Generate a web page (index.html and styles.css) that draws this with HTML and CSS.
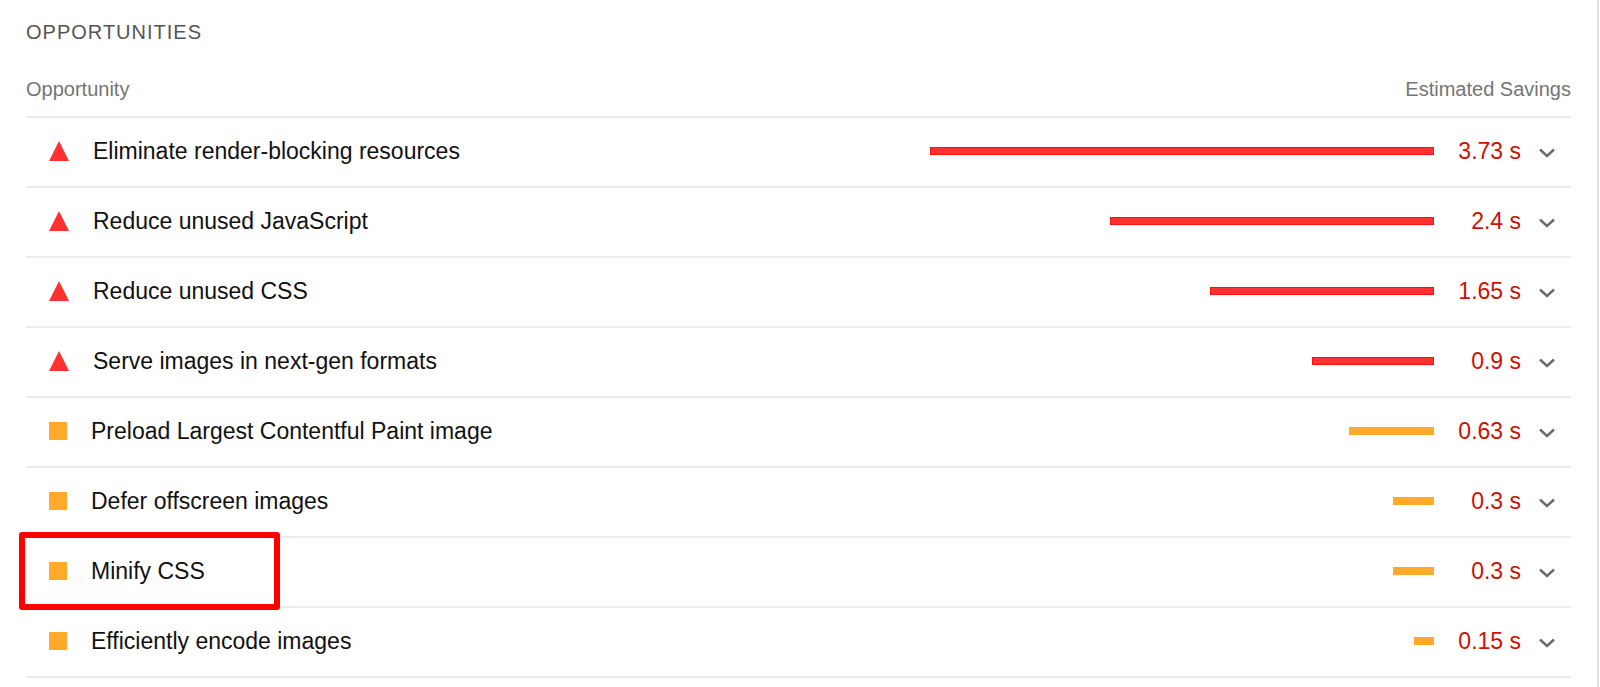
FILE: index.html
```html
<!DOCTYPE html>
<html lang="en">
<head>
<meta charset="utf-8">
<meta name="viewport" content="width=device-width, initial-scale=1">
<title>Opportunities</title>
<link rel="stylesheet" href="styles.css">
</head>
<body>
<svg class="symbols" aria-hidden="true">
  <symbol id="fail" viewBox="0 0 20 20"><path d="M10 0 20 20H0Z" fill="#ff3131"/></symbol>
  <symbol id="average" viewBox="0 0 18 18"><path d="M0 0h18v18H0z" fill="#ffaa2a"/></symbol>
  <symbol id="chevron" viewBox="0 0 16 14"><path d="M1 5.5 8 12l7-6.5" fill="none" stroke="#6b6b6b" stroke-width="2.4"/></symbol>
</svg>
<main class="panel">
  <h2 class="heading">Opportunities</h2>
  <div class="columns"><span>Opportunity</span><span>Estimated Savings</span></div>
  <ul class="audits">
    <li class="audit fail"><button class="row" type="button">
      <span class="name"><svg class="mark"><use href="#fail"/></svg>Eliminate render-blocking resources</span>
      <span class="track"><span class="bar" style="width:99.5%"></span></span>
      <span class="value">3.73 s</span><svg class="chevron"><use href="#chevron"/></svg></button></li>
    <li class="audit fail"><button class="row" type="button">
      <span class="name"><svg class="mark"><use href="#fail"/></svg>Reduce unused JavaScript</span>
      <span class="track"><span class="bar" style="width:64%"></span></span>
      <span class="value">2.4 s</span><svg class="chevron"><use href="#chevron"/></svg></button></li>
    <li class="audit fail"><button class="row" type="button">
      <span class="name"><svg class="mark"><use href="#fail"/></svg>Reduce unused CSS</span>
      <span class="track"><span class="bar" style="width:44.1%"></span></span>
      <span class="value">1.65 s</span><svg class="chevron"><use href="#chevron"/></svg></button></li>
    <li class="audit fail"><button class="row" type="button">
      <span class="name"><svg class="mark"><use href="#fail"/></svg>Serve images in next-gen formats</span>
      <span class="track"><span class="bar" style="width:24.1%"></span></span>
      <span class="value">0.9 s</span><svg class="chevron"><use href="#chevron"/></svg></button></li>
    <li class="audit average"><button class="row" type="button">
      <span class="name"><svg class="mark"><use href="#average"/></svg>Preload Largest Contentful Paint image</span>
      <span class="track"><span class="bar" style="width:16.8%"></span></span>
      <span class="value">0.63 s</span><svg class="chevron"><use href="#chevron"/></svg></button></li>
    <li class="audit average"><button class="row" type="button">
      <span class="name"><svg class="mark"><use href="#average"/></svg>Defer offscreen images</span>
      <span class="track"><span class="bar" style="width:8.1%"></span></span>
      <span class="value">0.3 s</span><svg class="chevron"><use href="#chevron"/></svg></button></li>
    <li class="audit average highlighted"><button class="row" type="button">
      <span class="name"><svg class="mark"><use href="#average"/></svg>Minify CSS</span>
      <span class="track"><span class="bar" style="width:8.1%"></span></span>
      <span class="value">0.3 s</span><svg class="chevron"><use href="#chevron"/></svg></button></li>
    <li class="audit average"><button class="row" type="button">
      <span class="name"><svg class="mark"><use href="#average"/></svg>Efficiently encode images</span>
      <span class="track"><span class="bar" style="width:4%"></span></span>
      <span class="value">0.15 s</span><svg class="chevron"><use href="#chevron"/></svg></button></li>
  </ul>
</main>
</body>
</html>
```
FILE: styles.css
```css
*,
*::after {
  box-sizing: border-box;
}

body {
  margin: 0;
  background: #fff;
  color: #111;
  font: 23px/28px "Liberation Sans", Arial, sans-serif;
}

.symbols {
  display: none;
}

.panel {
  min-height: 100vh;
  margin-right: 1px;
  padding: 18px 26px 9px;
  border-right: 2px solid #e0e0e0;
}

.heading {
  margin: 0;
  color: #555;
  font-size: 20px;
  font-weight: 400;
  line-height: 28px;
  letter-spacing: 1px;
  text-transform: uppercase;
}

.columns {
  display: flex;
  justify-content: space-between;
  padding: 29px 0 13px;
  color: #757575;
  font-size: 20px;
}

.audits {
  margin: 0;
  padding: 0;
  border-top: 2px solid #ebebeb;
  list-style: none;
}

.audit {
  position: relative;
  border-bottom: 2px solid #ebebeb;
}

.row {
  display: grid;
  grid-template-columns: 16fr 9fr 87px 34px 16px;
  align-items: center;
  width: 100%;
  padding: 19px 0 21px;
  border: 0;
  background: none;
  color: inherit;
  font: inherit;
  text-align: left;
  cursor: pointer;
}

.name {
  display: flex;
  align-items: center;
  gap: 24px;
  padding-left: 23px;
}

.mark {
  flex: none;
  width: 18px;
  height: 18px;
}

.fail .mark {
  width: 20px;
  height: 20px;
}

.track {
  display: flex;
  justify-content: flex-end;
}

.bar {
  height: 8px;
  background: #ffaa2a;
}

.fail .bar {
  border: 1px solid #ff1010;
  background: #ff3131;
}

.value {
  color: #c10;
  text-align: right;
}

.chevron {
  justify-self: end;
  width: 16px;
  height: 14px;
}

.highlighted::after {
  content: "";
  position: absolute;
  top: -6px;
  bottom: -4px;
  left: -7px;
  width: 261px;
  border: 6px solid #f00;
  border-radius: 3px;
  pointer-events: none;
}
```
